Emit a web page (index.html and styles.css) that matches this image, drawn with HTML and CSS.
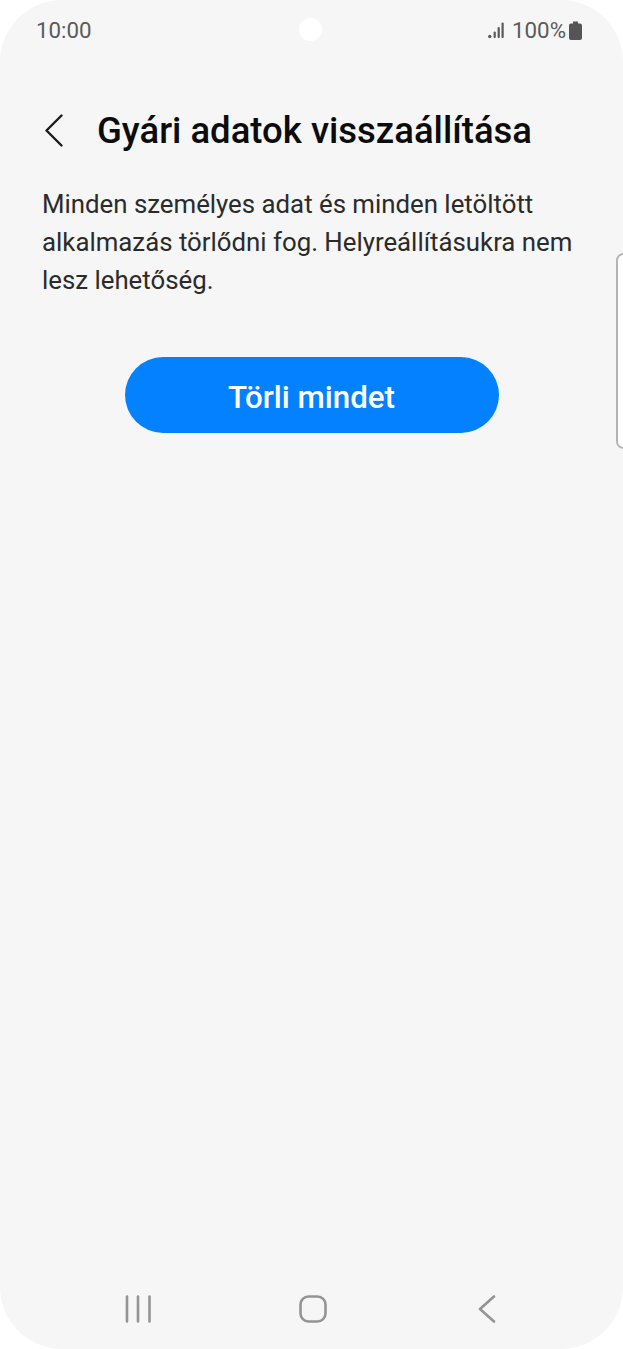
FILE: index.html
```html
<!DOCTYPE html>
<html lang="hu">
<head>
<meta charset="utf-8">
<title>Gyári adatok visszaállítása</title>
<link rel="stylesheet" href="styles.css">
</head>
<body>
<div class="phone">
  <div class="side-key"></div>
  <header class="status">
    <span class="clock">10:00</span>
    <span class="camera"></span>
    <span class="indicators">
      <svg class="signal" width="16" height="17" viewBox="0 0 16 17">
        <circle cx="1.800" cy="14.500" r="1.700"/>
        <rect x="5.600" y="9.500" width="2.200" height="6.700" rx="1.100"/>
        <rect x="9.600" y="5" width="2.200" height="11.200" rx="1.100"/>
        <rect x="13.500" y="0.500" width="2.200" height="15.700" rx="1.100"/>
      </svg>
      <span class="level">100%</span>
      <svg class="battery" width="13" height="19" viewBox="0 0 13 19">
        <path d="M4 0.500h5v2h2a2 2 0 0 1 2 2V17a2 2 0 0 1-2 2H2a2 2 0 0 1-2-2V4.500a2 2 0 0 1 2-2h2z"/>
      </svg>
    </span>
  </header>

  <main class="content">
    <div class="title-row">
      <svg class="back" width="20" height="34" viewBox="0 0 20 34">
        <path d="M17.500 1.500 2.500 16.500 17.500 31.500"/>
      </svg>
      <h1 class="title">Gyári adatok visszaállítása</h1>
    </div>
    <p class="message">Minden személyes adat és minden letöltött alkalmazás törlődni fog. Helyreállításukra nem lesz lehetőség.</p>
    <button class="primary" type="button">Törli mindet</button>
  </main>

  <nav class="softkeys">
    <svg width="28" height="28" viewBox="0 0 28 28">
      <path d="M3 1.500v25M14 1.500v25M25.500 1.500v25"/>
    </svg>
    <svg width="28" height="28" viewBox="0 0 28 28">
      <rect x="1.500" y="1.500" width="25" height="25" rx="8"/>
    </svg>
    <svg width="18" height="28" viewBox="0 0 18 28">
      <path d="M16 1.500 2 14l14 12.500"/>
    </svg>
  </nav>
</div>
</body>
</html>
```

FILE: styles.css
```css
* {
  box-sizing: border-box;
}

html,
body {
  margin: 0;
  padding: 0;
  background: #ffffff;
}

.phone {
  position: relative;
  width: 623px;
  height: 1349px;
  display: flex;
  flex-direction: column;
  background: #f6f6f6;
  border-radius: 62px;
  font-family: Roboto, "Noto Sans", sans-serif;
  overflow: hidden;
}

/* Volume key outline on the right edge */
.side-key {
  position: absolute;
  top: 253px;
  right: -8px;
  width: 15px;
  height: 196px;
  background: #ffffff;
  border: 2px solid #b4b4b4;
  border-radius: 8px;
}

.status {
  position: relative;
  height: 60px;
  flex: none;
  display: flex;
  align-items: center;
  justify-content: space-between;
  padding: 0 41px 0 36px;
  color: #5a5a5a;
  font-size: 22.300px;
}

.camera {
  position: absolute;
  left: 299px;
  top: 18px;
  width: 23px;
  height: 23px;
  border-radius: 50%;
  background: #ffffff;
}

.indicators {
  display: flex;
  align-items: center;
  gap: 3px;
}

.signal {
  margin-right: 5px;
  fill: #5a5a5a;
}

.battery {
  fill: #555555;
}

.content {
  flex: 1;
  display: flex;
  flex-direction: column;
  padding: 0 42px;
}

.title-row {
  display: flex;
  align-items: center;
  gap: 33px;
  margin-top: 54px;
  height: 34px;
  padding-left: 2px;
}

.back path {
  fill: none;
  stroke: #1c1c1c;
  stroke-width: 2.400;
  stroke-linecap: round;
  stroke-linejoin: round;
}

.title {
  margin: 0;
  color: #0c0c0c;
  font-size: 36.500px;
  font-weight: 500;
  line-height: 40px;
  white-space: nowrap;
}

.message {
  margin: 37px 0 0;
  color: #2b2b2b;
  font-size: 25.800px;
  line-height: 38px;
}

.primary {
  align-self: center;
  margin-top: 58px;
  width: 374px;
  height: 76px;
  padding: 4px 0 0;
  border: 0;
  border-radius: 38px;
  background: #0381fe;
  color: #ffffff;
  font-family: inherit;
  font-size: 31.300px;
  font-weight: 500;
}

.softkeys {
  flex: none;
  height: 82px;
  padding: 2px 0 0 51px;
  display: grid;
  grid-template-columns: repeat(3, 174.600px);
  justify-items: center;
  align-items: center;
}

.softkeys path,
.softkeys rect {
  fill: none;
  stroke: #949494;
  stroke-width: 2.600;
  stroke-linecap: round;
  stroke-linejoin: round;
}
```
